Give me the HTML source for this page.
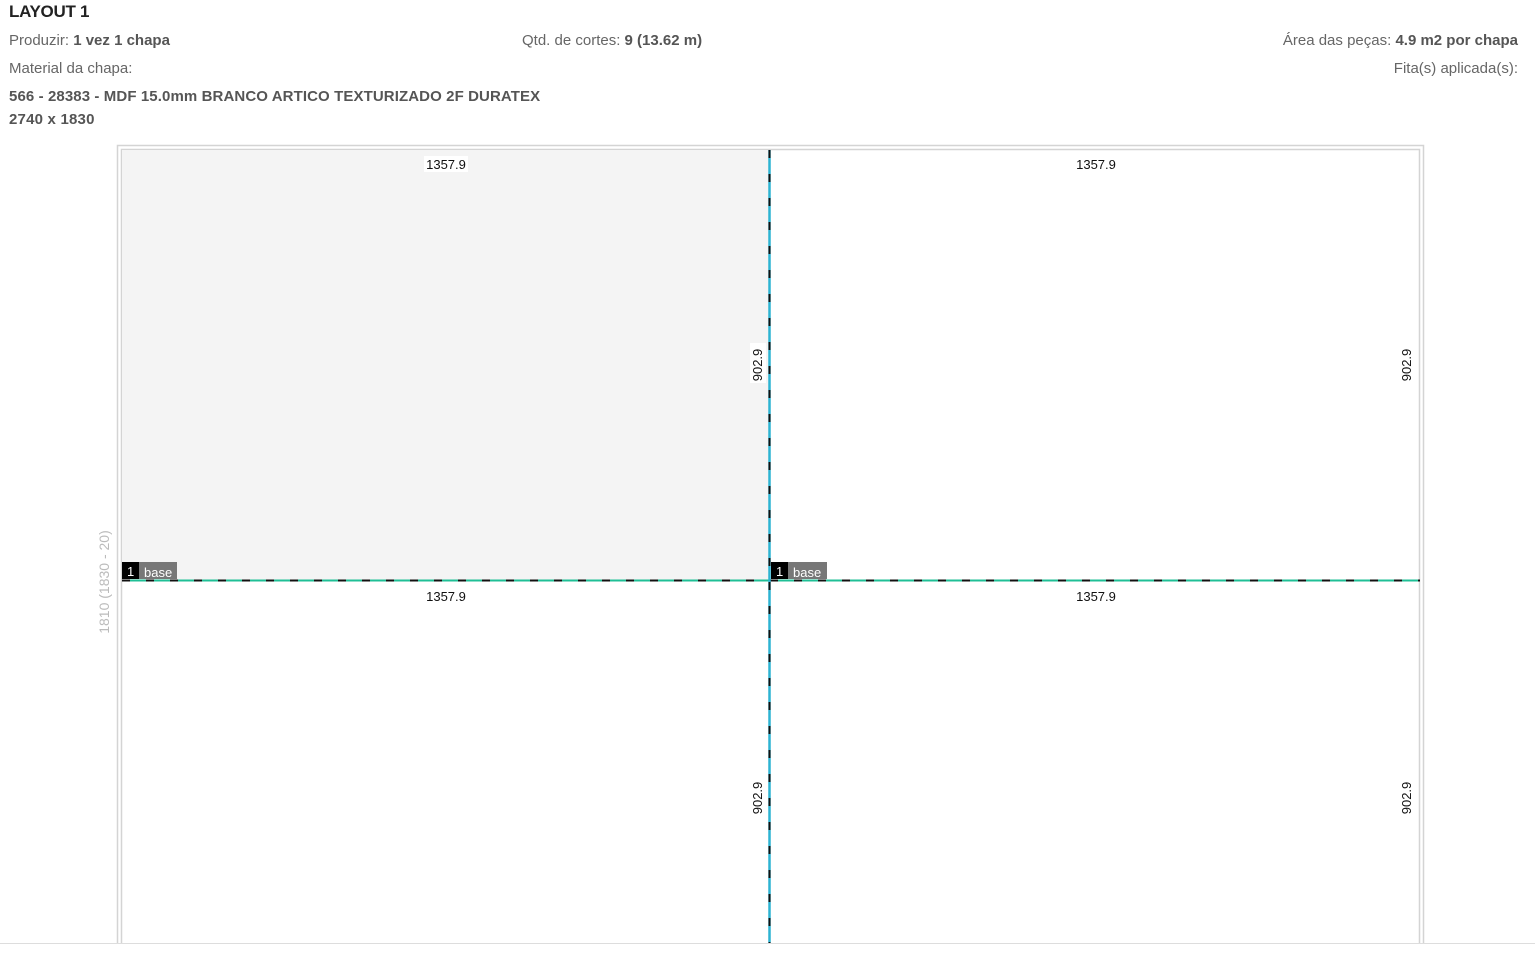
<!DOCTYPE html>
<html><head><meta charset="utf-8"><style>
body{margin:0;width:1535px;height:954px;overflow:hidden;background:#fff;font-family:"Liberation Sans",sans-serif;color:#666;position:relative}
.t{position:absolute;font-size:15px;white-space:nowrap}
b{color:#555}
</style></head><body>
<div class="t" style="left:9px;top:2px;font-size:17px;font-weight:bold;color:#222;letter-spacing:-0.3px">LAYOUT 1</div>
<div class="t" style="left:9px;top:32px">Produzir: <b>1 vez 1 chapa</b></div>
<div class="t" style="left:522px;top:32px">Qtd. de cortes: <b>9 (13.62 m)</b></div>
<div class="t" style="right:17px;top:32px">Área das peças: <b>4.9 m2 por chapa</b></div>
<div class="t" style="left:9px;top:60px">Material da chapa:</div>
<div class="t" style="right:17px;top:60px">Fita(s) aplicada(s):</div>
<div class="t" style="left:9px;top:88px;font-weight:bold;color:#555;letter-spacing:0.1px">566 - 28383 - MDF 15.0mm BRANCO ARTICO TEXTURIZADO 2F DURATEX</div>
<div class="t" style="left:9px;top:111px;font-weight:bold;color:#555;letter-spacing:0.2px">2740 x 1830</div>
<svg width="1535" height="954" style="position:absolute;left:0;top:0" font-family="Liberation Sans, sans-serif">
<rect x="117.5" y="145.5" width="1306" height="820" fill="none" stroke="#d4d4d4" stroke-width="1.5"/>
<rect x="121.5" y="149.5" width="1298" height="820" fill="none" stroke="#d4d4d4" stroke-width="1.5"/>
<rect x="122" y="150" width="647" height="430" fill="#f4f4f4"/>
<line x1="122" y1="580.5" x2="1420" y2="580.5" stroke="#1fbf96" stroke-width="2"/>
<line x1="122" y1="580.5" x2="1420" y2="580.5" stroke="#111" stroke-width="2" stroke-dasharray="8 16"/>
<line x1="769.5" y1="150" x2="769.5" y2="943" stroke="#2db3d2" stroke-width="2.5"/>
<line x1="769.5" y1="150" x2="769.5" y2="943" stroke="#111" stroke-width="2" stroke-dasharray="8 16"/>
<g font-size="13" fill="#111" text-anchor="middle">
<rect x="424" y="156" width="44" height="16" fill="#fff"/><text x="446" y="169">1357.9</text>
<rect x="1074" y="156" width="44" height="16" fill="#fff"/><text x="1096" y="169">1357.9</text>
<rect x="424" y="588" width="44" height="16" fill="#fff"/><text x="446" y="601">1357.9</text>
<rect x="1074" y="588" width="44" height="16" fill="#fff"/><text x="1096" y="601">1357.9</text>
<rect x="750" y="343" width="16" height="40" fill="#fff"/><text transform="translate(762,365) rotate(-90)">902.9</text>
<rect x="1399" y="343" width="16" height="40" fill="#fff"/><text transform="translate(1411,365) rotate(-90)">902.9</text>
<rect x="750" y="776" width="16" height="40" fill="#fff"/><text transform="translate(762,798) rotate(-90)">902.9</text>
<rect x="1399" y="776" width="16" height="40" fill="#fff"/><text transform="translate(1411,798) rotate(-90)">902.9</text>
</g>
<g font-size="13">
<rect x="122" y="562" width="17" height="17" fill="#000"/><text x="127" y="576" fill="#fff">1</text>
<rect x="139" y="562" width="38" height="17" fill="#777"/><text x="144" y="577" fill="#fff">base</text>
<rect x="771" y="562" width="17" height="17" fill="#000"/><text x="776" y="576" fill="#fff">1</text>
<rect x="788" y="562" width="39" height="17" fill="#777"/><text x="793" y="577" fill="#fff">base</text>
</g>
<text transform="translate(109,582) rotate(-90)" font-size="14" fill="#bbb" text-anchor="middle">1810 (1830 - 20)</text>
<rect x="0" y="943" width="1535" height="11" fill="#fff"/>
<line x1="0" y1="943.5" x2="1535" y2="943.5" stroke="#ddd" stroke-width="1"/>
</svg>
</body></html>
